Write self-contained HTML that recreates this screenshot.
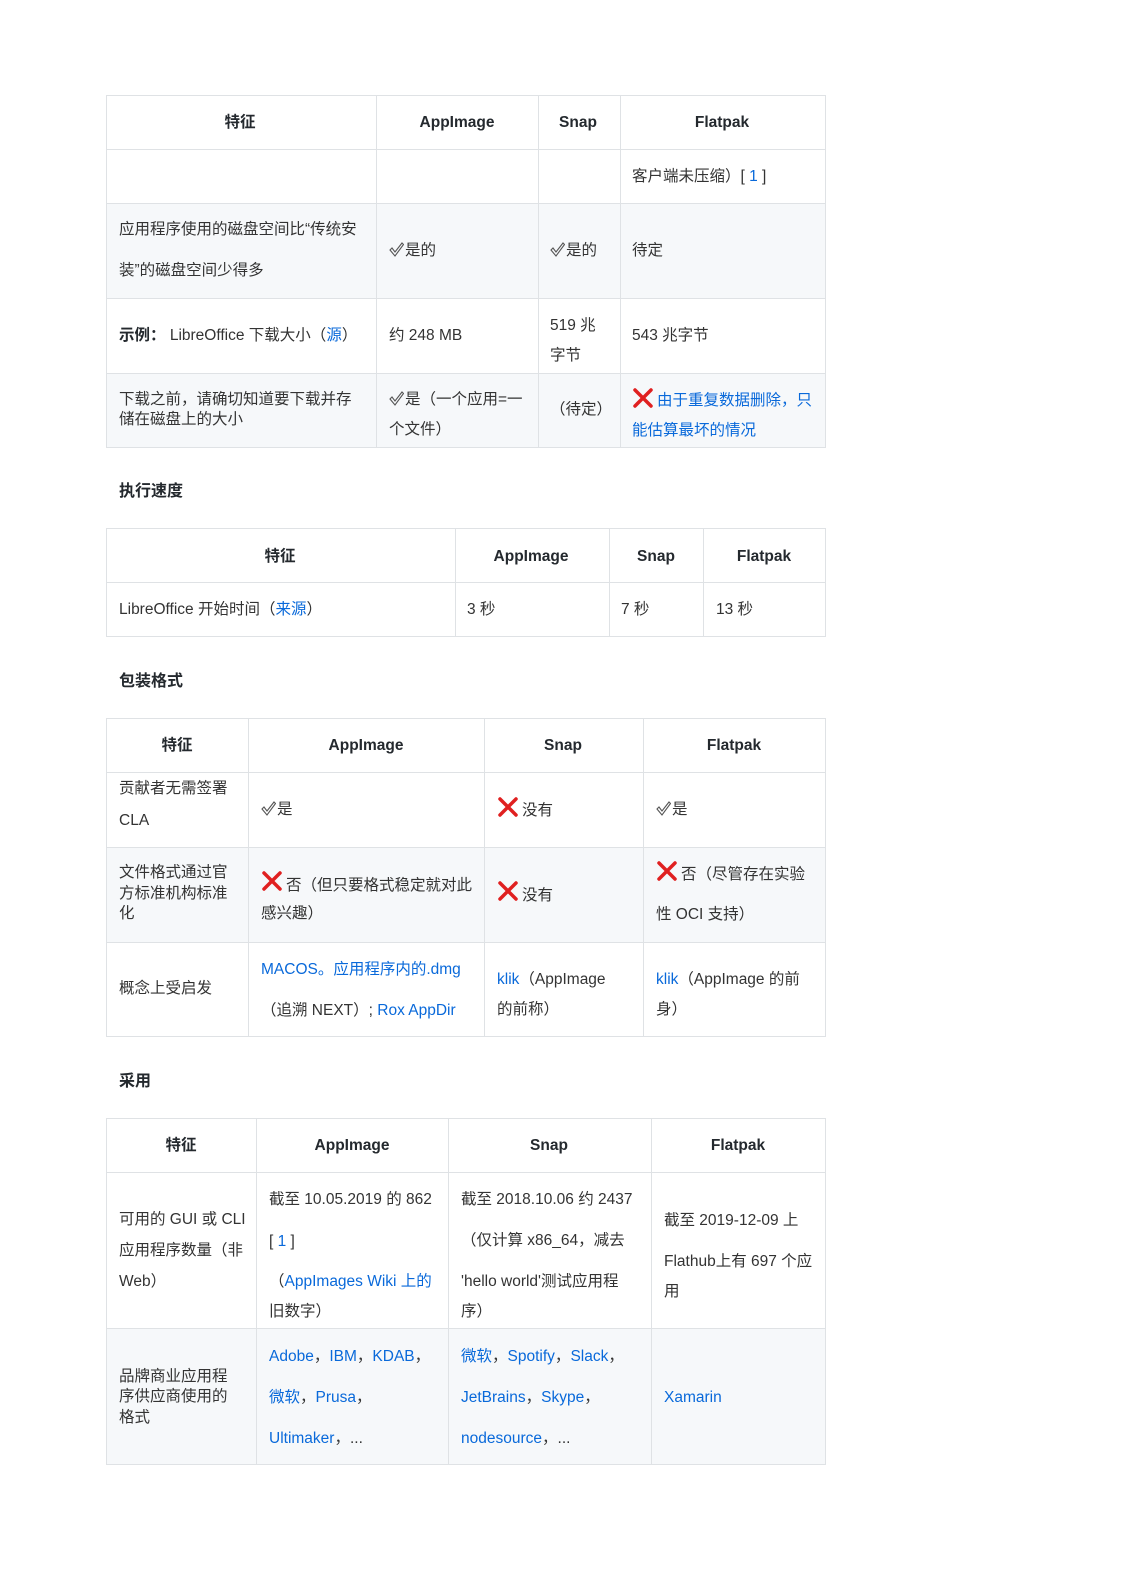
<!DOCTYPE html>
<html><head><meta charset="utf-8">
<style>
*{margin:0;padding:0;box-sizing:border-box}
html,body{width:1123px;height:1587px;background:#fff;overflow:hidden}
body{position:relative;font-family:"Liberation Sans","Noto Sans CJK SC",sans-serif;font-size:15.5px;color:#333}
.t{position:absolute;line-height:20px;white-space:nowrap}
.c{transform:translateX(-50%);font-weight:bold;color:#24292e}
.h{position:absolute;font-weight:bold;font-size:16px;color:#24292e;line-height:20px}
.a{color:#0969da}
.b{font-weight:bold;color:#24292e}
.tb{position:absolute;border:1px solid #dfe2e5}
.hl{position:absolute;height:1px;background:#dfe2e5}
.vl{position:absolute;width:1px;background:#dfe2e5}
.sh{position:absolute;background:#f6f8fa}
.x{position:absolute;width:22px;height:22px}
.ck{display:inline-block;width:15px;height:15px;vertical-align:-2px;margin-right:1px}
</style></head><body>

<div class="sh" style="left:106px;top:203px;width:719px;height:95px"></div>
<div class="sh" style="left:106px;top:373px;width:719px;height:74px"></div>
<div class="sh" style="left:106px;top:847px;width:719px;height:95px"></div>
<div class="sh" style="left:106px;top:1328px;width:719px;height:136px"></div>

<div class="tb" style="left:106px;top:95px;width:720px;height:353px"></div>
<div class="hl" style="left:106px;top:149px;width:719px"></div>
<div class="hl" style="left:106px;top:203px;width:719px"></div>
<div class="hl" style="left:106px;top:298px;width:719px"></div>
<div class="hl" style="left:106px;top:373px;width:719px"></div>
<div class="vl" style="left:376px;top:95px;height:352px"></div>
<div class="vl" style="left:538px;top:95px;height:352px"></div>
<div class="vl" style="left:620px;top:95px;height:352px"></div>

<div class="t c" style="left:240px;top:113px">特征</div>
<div class="t c" style="left:457px;top:113px">AppImage</div>
<div class="t c" style="left:578px;top:113px">Snap</div>
<div class="t c" style="left:722px;top:113px">Flatpak</div>
<div class="t" style="left:632px;top:167px">客户端未压缩）[ <span class="a">1</span> ]</div>
<div class="t" style="left:119px;top:220px">应用程序使用的磁盘空间比“传统安</div>
<div class="t" style="left:119px;top:261px">装”的磁盘空间少得多</div>
<div class="t" style="left:389px;top:241px"><svg class="ck" viewBox="0 0 15 15"><path d="M1 8 L3 6 L6 10 L13 1 L14.5 2.5 L6 14 Z" fill="none" stroke="#555" stroke-width="1.1"/></svg>是的</div>
<div class="t" style="left:550px;top:241px"><svg class="ck" viewBox="0 0 15 15"><path d="M1 8 L3 6 L6 10 L13 1 L14.5 2.5 L6 14 Z" fill="none" stroke="#555" stroke-width="1.1"/></svg>是的</div>
<div class="t" style="left:632px;top:241px">待定</div>
<div class="t" style="left:119px;top:326px"><span class="b">示例：</span> LibreOffice 下载大小（<span class="a">源</span>）</div>
<div class="t" style="left:389px;top:326px">约 248 MB</div>
<div class="t" style="left:550px;top:316px">519 兆</div>
<div class="t" style="left:550px;top:346px">字节</div>
<div class="t" style="left:632px;top:326px">543 兆字节</div>
<div class="t" style="left:119px;top:390px">下载之前，请确切知道要下载并存</div>
<div class="t" style="left:119px;top:410px">储在磁盘上的大小</div>
<div class="t" style="left:389px;top:390px"><svg class="ck" viewBox="0 0 15 15"><path d="M1 8 L3 6 L6 10 L13 1 L14.5 2.5 L6 14 Z" fill="none" stroke="#555" stroke-width="1.1"/></svg>是（一个应用=一</div>
<div class="t" style="left:389px;top:420px">个文件）</div>
<div class="t" style="left:550px;top:400px">（待定）</div>
<svg class="x" style="left:632px;top:387px" viewBox="0 0 22 22"><path d="M3 3 L19 19 M19 3 L3 19" stroke="#e02020" stroke-width="3.5" stroke-linecap="round"/></svg>
<div class="t a" style="left:657px;top:391px">由于重复数据删除，只</div>
<div class="t a" style="left:632px;top:421px">能估算最坏的情况</div>

<div class="h" style="left:119px;top:482px">执行速度</div>

<div class="tb" style="left:106px;top:528px;width:720px;height:109px"></div>
<div class="hl" style="left:106px;top:582px;width:719px"></div>
<div class="vl" style="left:455px;top:528px;height:108px"></div>
<div class="vl" style="left:609px;top:528px;height:108px"></div>
<div class="vl" style="left:703px;top:528px;height:108px"></div>
<div class="t c" style="left:280px;top:547px">特征</div>
<div class="t c" style="left:531px;top:547px">AppImage</div>
<div class="t c" style="left:656px;top:547px">Snap</div>
<div class="t c" style="left:764px;top:547px">Flatpak</div>
<div class="t" style="left:119px;top:600px">LibreOffice 开始时间（<span class="a">来源</span>）</div>
<div class="t" style="left:467px;top:600px">3 秒</div>
<div class="t" style="left:621px;top:600px">7 秒</div>
<div class="t" style="left:716px;top:600px">13 秒</div>

<div class="h" style="left:119px;top:672px">包装格式</div>

<div class="tb" style="left:106px;top:718px;width:720px;height:319px"></div>
<div class="hl" style="left:106px;top:772px;width:719px"></div>
<div class="hl" style="left:106px;top:847px;width:719px"></div>
<div class="hl" style="left:106px;top:942px;width:719px"></div>
<div class="vl" style="left:248px;top:718px;height:318px"></div>
<div class="vl" style="left:484px;top:718px;height:318px"></div>
<div class="vl" style="left:643px;top:718px;height:318px"></div>
<div class="t c" style="left:177px;top:736px">特征</div>
<div class="t c" style="left:366px;top:736px">AppImage</div>
<div class="t c" style="left:563px;top:736px">Snap</div>
<div class="t c" style="left:734px;top:736px">Flatpak</div>
<div class="t" style="left:119px;top:779px">贡献者无需签署</div>
<div class="t" style="left:119px;top:811px">CLA</div>
<div class="t" style="left:261px;top:800px"><svg class="ck" viewBox="0 0 15 15"><path d="M1 8 L3 6 L6 10 L13 1 L14.5 2.5 L6 14 Z" fill="none" stroke="#555" stroke-width="1.1"/></svg>是</div>
<svg class="x" style="left:497px;top:796px" viewBox="0 0 22 22"><path d="M3 3 L19 19 M19 3 L3 19" stroke="#e02020" stroke-width="3.5" stroke-linecap="round"/></svg>
<div class="t" style="left:522px;top:801px">没有</div>
<div class="t" style="left:656px;top:800px"><svg class="ck" viewBox="0 0 15 15"><path d="M1 8 L3 6 L6 10 L13 1 L14.5 2.5 L6 14 Z" fill="none" stroke="#555" stroke-width="1.1"/></svg>是</div>
<div class="t" style="left:119px;top:863px">文件格式通过官</div>
<div class="t" style="left:119px;top:884px">方标准机构标准</div>
<div class="t" style="left:119px;top:904px">化</div>
<svg class="x" style="left:261px;top:870px" viewBox="0 0 22 22"><path d="M3 3 L19 19 M19 3 L3 19" stroke="#e02020" stroke-width="3.5" stroke-linecap="round"/></svg>
<div class="t" style="left:286px;top:876px">否（但只要格式稳定就对此</div>
<div class="t" style="left:261px;top:904px">感兴趣）</div>
<svg class="x" style="left:497px;top:880px" viewBox="0 0 22 22"><path d="M3 3 L19 19 M19 3 L3 19" stroke="#e02020" stroke-width="3.5" stroke-linecap="round"/></svg>
<div class="t" style="left:522px;top:886px">没有</div>
<svg class="x" style="left:656px;top:860px" viewBox="0 0 22 22"><path d="M3 3 L19 19 M19 3 L3 19" stroke="#e02020" stroke-width="3.5" stroke-linecap="round"/></svg>
<div class="t" style="left:681px;top:865px">否（尽管存在实验</div>
<div class="t" style="left:656px;top:905px">性 OCI 支持）</div>
<div class="t" style="left:119px;top:979px">概念上受启发</div>
<div class="t a" style="left:261px;top:960px">MACOS。应用程序内的.dmg</div>
<div class="t" style="left:261px;top:1001px">（追溯 NEXT）; <span class="a">Rox AppDir</span></div>
<div class="t" style="left:497px;top:970px"><span class="a">klik</span>（AppImage</div>
<div class="t" style="left:497px;top:1000px">的前称）</div>
<div class="t" style="left:656px;top:970px"><span class="a">klik</span>（AppImage 的前</div>
<div class="t" style="left:656px;top:1000px">身）</div>

<div class="h" style="left:119px;top:1072px">采用</div>

<div class="tb" style="left:106px;top:1118px;width:720px;height:347px"></div>
<div class="hl" style="left:106px;top:1172px;width:719px"></div>
<div class="hl" style="left:106px;top:1328px;width:719px"></div>
<div class="vl" style="left:256px;top:1118px;height:346px"></div>
<div class="vl" style="left:448px;top:1118px;height:346px"></div>
<div class="vl" style="left:651px;top:1118px;height:346px"></div>
<div class="t c" style="left:181px;top:1136px">特征</div>
<div class="t c" style="left:352px;top:1136px">AppImage</div>
<div class="t c" style="left:549px;top:1136px">Snap</div>
<div class="t c" style="left:738px;top:1136px">Flatpak</div>
<div class="t" style="left:119px;top:1210px">可用的 GUI 或 CLI</div>
<div class="t" style="left:119px;top:1241px">应用程序数量（非</div>
<div class="t" style="left:119px;top:1272px">Web）</div>
<div class="t" style="left:269px;top:1190px">截至 10.05.2019 的 862</div>
<div class="t" style="left:269px;top:1232px">[ <span class="a">1</span> ]</div>
<div class="t" style="left:269px;top:1272px">（<span class="a">AppImages Wiki 上的</span></div>
<div class="t" style="left:269px;top:1302px">旧数字）</div>
<div class="t" style="left:461px;top:1190px">截至 2018.10.06 约 2437</div>
<div class="t" style="left:461px;top:1231px">（仅计算 x86_64，减去</div>
<div class="t" style="left:461px;top:1272px">'hello world'测试应用程</div>
<div class="t" style="left:461px;top:1302px">序）</div>
<div class="t" style="left:664px;top:1211px">截至 2019-12-09 上</div>
<div class="t" style="left:664px;top:1252px">Flathub上有 697 个应</div>
<div class="t" style="left:664px;top:1282px">用</div>
<div class="t" style="left:119px;top:1367px">品牌商业应用程</div>
<div class="t" style="left:119px;top:1387px">序供应商使用的</div>
<div class="t" style="left:119px;top:1408px">格式</div>
<div class="t" style="left:269px;top:1347px"><span class="a">Adobe</span>，<span class="a">IBM</span>，<span class="a">KDAB</span>，</div>
<div class="t" style="left:269px;top:1388px"><span class="a">微软</span>，<span class="a">Prusa</span>，</div>
<div class="t" style="left:269px;top:1429px"><span class="a">Ultimaker</span>，...</div>
<div class="t" style="left:461px;top:1347px"><span class="a">微软</span>，<span class="a">Spotify</span>，<span class="a">Slack</span>，</div>
<div class="t" style="left:461px;top:1388px"><span class="a">JetBrains</span>，<span class="a">Skype</span>，</div>
<div class="t" style="left:461px;top:1429px"><span class="a">nodesource</span>，...</div>
<div class="t a" style="left:664px;top:1388px">Xamarin</div>

</body></html>
